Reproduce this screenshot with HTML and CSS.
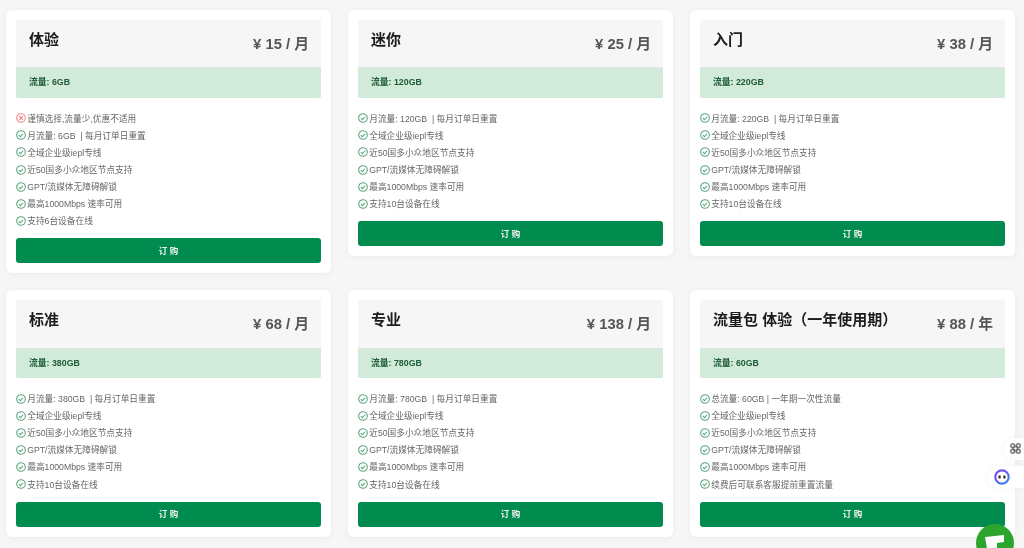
FILE: index.html
```html
<!DOCTYPE html>
<html lang="zh-CN">
<head>
<meta charset="utf-8">
<title>套餐</title>
<link rel="stylesheet" href="styles.css">
</head>
<body>
<svg class="defs" width="0" height="0">
  <symbol id="ok" viewBox="0 0 16 16"><circle cx="8" cy="8" r="6.9" fill="none" stroke="currentColor" stroke-width="1.7"/><path d="M4.6 8.2l2.4 2.4 4.4-4.6" fill="none" stroke="currentColor" stroke-width="1.7"/></symbol>
  <symbol id="no" viewBox="0 0 16 16"><circle cx="8" cy="8" r="6.9" fill="none" stroke="currentColor" stroke-width="1.7"/><path d="M5.2 5.2l5.6 5.6M10.8 5.2l-5.6 5.6" fill="none" stroke="currentColor" stroke-width="1.7"/></symbol>
</svg>
<main class="grid">
  <section class="card">
    <header class="head"><h2>体验</h2><div class="price">¥ 15 / 月</div></header>
    <div class="band">流量: 6GB</div>
    <ul class="list">
      <li><svg class="ic bad"><use href="#no"/></svg>谨慎选择,流量少,优惠不适用</li>
      <li><svg class="ic"><use href="#ok"/></svg>月流量: 6GB &nbsp;| 每月订单日重置</li>
      <li><svg class="ic"><use href="#ok"/></svg>全域企业级iepl专线</li>
      <li><svg class="ic"><use href="#ok"/></svg>近50国多小众地区节点支持</li>
      <li><svg class="ic"><use href="#ok"/></svg>GPT/流媒体无障碍解锁</li>
      <li><svg class="ic"><use href="#ok"/></svg>最高1000Mbps 速率可用</li>
      <li><svg class="ic"><use href="#ok"/></svg>支持6台设备在线</li>
    </ul>
    <button class="buy">订 购</button>
  </section>
  <section class="card">
    <header class="head"><h2>迷你</h2><div class="price">¥ 25 / 月</div></header>
    <div class="band">流量: 120GB</div>
    <ul class="list">
      <li><svg class="ic"><use href="#ok"/></svg>月流量: 120GB &nbsp;| 每月订单日重置</li>
      <li><svg class="ic"><use href="#ok"/></svg>全域企业级iepl专线</li>
      <li><svg class="ic"><use href="#ok"/></svg>近50国多小众地区节点支持</li>
      <li><svg class="ic"><use href="#ok"/></svg>GPT/流媒体无障碍解锁</li>
      <li><svg class="ic"><use href="#ok"/></svg>最高1000Mbps 速率可用</li>
      <li><svg class="ic"><use href="#ok"/></svg>支持10台设备在线</li>
    </ul>
    <button class="buy">订 购</button>
  </section>
  <section class="card">
    <header class="head"><h2>入门</h2><div class="price">¥ 38 / 月</div></header>
    <div class="band">流量: 220GB</div>
    <ul class="list">
      <li><svg class="ic"><use href="#ok"/></svg>月流量: 220GB &nbsp;| 每月订单日重置</li>
      <li><svg class="ic"><use href="#ok"/></svg>全域企业级iepl专线</li>
      <li><svg class="ic"><use href="#ok"/></svg>近50国多小众地区节点支持</li>
      <li><svg class="ic"><use href="#ok"/></svg>GPT/流媒体无障碍解锁</li>
      <li><svg class="ic"><use href="#ok"/></svg>最高1000Mbps 速率可用</li>
      <li><svg class="ic"><use href="#ok"/></svg>支持10台设备在线</li>
    </ul>
    <button class="buy">订 购</button>
  </section>
  <section class="card">
    <header class="head"><h2>标准</h2><div class="price">¥ 68 / 月</div></header>
    <div class="band">流量: 380GB</div>
    <ul class="list">
      <li><svg class="ic"><use href="#ok"/></svg>月流量: 380GB &nbsp;| 每月订单日重置</li>
      <li><svg class="ic"><use href="#ok"/></svg>全域企业级iepl专线</li>
      <li><svg class="ic"><use href="#ok"/></svg>近50国多小众地区节点支持</li>
      <li><svg class="ic"><use href="#ok"/></svg>GPT/流媒体无障碍解锁</li>
      <li><svg class="ic"><use href="#ok"/></svg>最高1000Mbps 速率可用</li>
      <li><svg class="ic"><use href="#ok"/></svg>支持10台设备在线</li>
    </ul>
    <button class="buy">订 购</button>
  </section>
  <section class="card">
    <header class="head"><h2>专业</h2><div class="price">¥ 138 / 月</div></header>
    <div class="band">流量: 780GB</div>
    <ul class="list">
      <li><svg class="ic"><use href="#ok"/></svg>月流量: 780GB &nbsp;| 每月订单日重置</li>
      <li><svg class="ic"><use href="#ok"/></svg>全域企业级iepl专线</li>
      <li><svg class="ic"><use href="#ok"/></svg>近50国多小众地区节点支持</li>
      <li><svg class="ic"><use href="#ok"/></svg>GPT/流媒体无障碍解锁</li>
      <li><svg class="ic"><use href="#ok"/></svg>最高1000Mbps 速率可用</li>
      <li><svg class="ic"><use href="#ok"/></svg>支持10台设备在线</li>
    </ul>
    <button class="buy">订 购</button>
  </section>
  <section class="card">
    <header class="head"><h2>流量包 体验（一年使用期）</h2><div class="price">¥ 88 / 年</div></header>
    <div class="band">流量: 60GB</div>
    <ul class="list">
      <li><svg class="ic"><use href="#ok"/></svg>总流量: 60GB | 一年期一次性流量</li>
      <li><svg class="ic"><use href="#ok"/></svg>全域企业级iepl专线</li>
      <li><svg class="ic"><use href="#ok"/></svg>近50国多小众地区节点支持</li>
      <li><svg class="ic"><use href="#ok"/></svg>GPT/流媒体无障碍解锁</li>
      <li><svg class="ic"><use href="#ok"/></svg>最高1000Mbps 速率可用</li>
      <li><svg class="ic"><use href="#ok"/></svg>续费后可联系客服提前重置流量</li>
    </ul>
    <button class="buy">订 购</button>
  </section>
</main>
<aside class="tool tool-a">
  <svg width="11" height="11" viewBox="0 0 14 14" fill="none" stroke="#777" stroke-width="1.9"><circle cx="3.5" cy="3.5" r="2.5"/><circle cx="10.5" cy="3.5" r="2.5"/><circle cx="3.5" cy="10.5" r="2.5"/><circle cx="10.5" cy="10.5" r="2.5"/><rect x="4.5" y="4.5" width="5" height="5"/></svg>
</aside>
<aside class="tool tool-b">
  <svg width="16" height="16" viewBox="0 0 16 16"><defs><linearGradient id="ring" x1="0" y1="0" x2="1" y2="1"><stop offset="0" stop-color="#8a3ff0"/><stop offset="1" stop-color="#2f8cf5"/></linearGradient></defs><circle cx="8" cy="8" r="6.7" fill="#fff" stroke="url(#ring)" stroke-width="2.2"/><ellipse cx="5.6" cy="8" rx="1.3" ry="1.7" fill="#333"/><ellipse cx="10.4" cy="8" rx="1.3" ry="1.7" fill="#333"/></svg>
</aside>
<aside class="chat">
  <svg width="19" height="14" viewBox="0 0 19 14"><path d="M0 2L19 0V7L12 8V14H2Z" fill="#fff"/></svg>
</aside>
</body>
</html>
```
FILE: styles.css
```css
* { box-sizing: border-box; }
html, body { height: 100%; }
body {
  margin: 0;
  height: 548px;
  overflow: hidden;
  background: #f6f6f6;
  font-family: "Liberation Sans", "Noto Sans CJK SC", sans-serif;
  color: #333;
}
.defs { position: absolute; }
.grid {
  display: grid;
  grid-template-columns: repeat(3, 325px);
  column-gap: 17px;
  row-gap: 17px;
  align-items: start;
  padding: 10px 0 0 6px;
  filter: blur(.25px);
}
.card {
  background: #fff;
  border-radius: 6px;
  padding: 10px;
  box-shadow: 0 1px 6px rgba(0, 0, 0, .05);
}
.head {
  height: 47.4px;
  background: #f6f6f6;
  padding: 0 12px 0 13px;
  display: flex;
  justify-content: space-between;
  border-radius: 2px 2px 0 0;
}
.head h2 {
  margin: 9px 0 0;
  font-size: 15px;
  line-height: 21px;
  font-weight: 700;
  color: #1c1c1c;
}
.price {
  margin-top: 14px;
  font-size: 14.8px;
  line-height: 20px;
  font-weight: 700;
  color: #555;
}
.band {
  height: 30.3px;
  padding-left: 13px;
  background: #d2ead9;
  border-top: 1px solid #dfe9e2;
  border-radius: 0 0 2px 2px;
  font-size: 8.8px;
  line-height: 29px;
  font-weight: 700;
  color: #1d5c36;
}
.list {
  list-style: none;
  margin: 12px 0 0;
  padding: 0;
}
.list li {
  display: flex;
  align-items: center;
  gap: 1.2px;
  height: 17.1px;
  font-size: 8.7px;
  color: #666;
  white-space: nowrap;
}
.ic {
  width: 10px;
  height: 10px;
  color: #5aa77d;
  flex: none;
}
.ic.bad { color: #f08a8a; }
.buy {
  display: block;
  width: 100%;
  height: 25px;
  margin-top: 9px;
  padding-bottom: 3px;
  border: 0;
  border-radius: 3px;
  background: #008c4f;
  color: #f4f4f4;
  font: 700 8.5px "Liberation Sans", "Noto Sans CJK SC", sans-serif;
}
.tool {
  position: fixed;
  right: 0;
  height: 22px;
  background: #fff;
  display: flex;
  align-items: center;
  box-shadow: 0 0 6px rgba(0, 0, 0, .06);
}
.tool-a {
  top: 438px;
  width: 20px;
  border-radius: 11px 0 0 11px;
  padding: 0 0 1px 6px;
}
.tool-b {
  top: 466px;
  width: 36px;
  border-radius: 11px 0 0 11px;
  padding-left: 6px;
}
.chat {
  position: fixed;
  left: 976px;
  top: 524px;
  width: 38px;
  height: 38px;
  border-radius: 50%;
  background: #2ca52c;
  padding: 11px 0 0 9px;
}
```
